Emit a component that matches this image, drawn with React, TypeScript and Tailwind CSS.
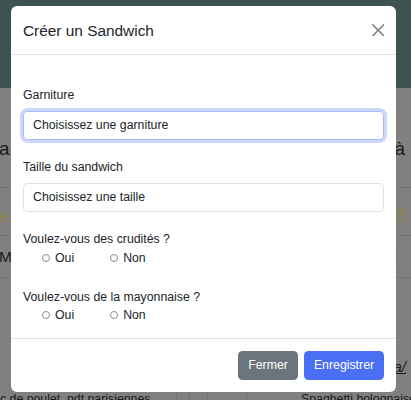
import React from "react";

function Radio({ label, className = "" }: { label: string; className?: string }) {
  return (
    <div className={"flex items-center " + className}>
      <span className="w-[8px] h-[8px] rounded-full border border-[#8a8a8a] bg-white" />
      <span className="ml-[5px]">{label}</span>
    </div>
  );
}

export default function App() {
  return (
    <div className="relative w-[411px] h-[400px] overflow-hidden bg-[#808080] font-['Liberation_Sans',Arial,sans-serif] text-[#1a1a1a]">
      {/* dimmed page behind the modal */}
      <div className="h-[88px] bg-[#3e524f]" />
      <div className="h-[100px] pt-[24px] flex items-center justify-between border-b border-[#737373] text-[19px]">
        <span className="ml-[-1px]">a</span>
        <span className="pr-[6px]">à</span>
      </div>
      <div className="h-[48px] pt-[10px] flex items-center justify-between border-b border-[#737373] text-[18px] italic text-[#8f8245]">
        <span className="ml-[-2px]">e</span>
        <span className="pr-[4px]">5</span>
      </div>
      <div className="h-[42px] flex items-center justify-between border-b border-[#737373] text-[15.5px]">
        <span className="ml-[-1px]">M</span>
        <span className="pr-[14px]">l</span>
      </div>
      <div className="h-[108px] pb-[10px] flex items-end justify-end text-[15px]">
        <span className="pr-[5px] italic underline leading-[18px]">a/</span>
      </div>
      <div className="grid grid-cols-[176px_13px_18px_39px_1fr] text-[12.3px] leading-[18px] h-[20px]">
        <div className="pt-[4px] whitespace-nowrap overflow-hidden">c de poulet, pdt parisiennes,</div>
        <div className="border-l border-[#737373]" />
        <div className="border-l border-[#737373]" />
        <div className="border-l border-[#737373]" />
        <div className="border-l border-[#737373] pt-[4px] pl-[54px] whitespace-nowrap overflow-hidden">Spaghetti bolognaise</div>
      </div>

      {/* modal */}
      <div className="absolute left-[11px] top-[6px] w-[385px] h-[386px] bg-white rounded-[6px] flex flex-col text-[#212529]">
        <div className="h-[49px] shrink-0 border-b border-[#dee2e6] px-[12px] flex items-center justify-between">
          <span className="text-[15.4px] leading-[23px]">Créer un Sandwich</span>
          <svg width="12.5" height="12.5" viewBox="0 0 16 16" className="opacity-50">
            <path
              fill="#000"
              d="M.293.293a1 1 0 0 1 1.414 0L8 6.586 14.293.293a1 1 0 1 1 1.414 1.414L9.414 8l6.293 6.293a1 1 0 0 1-1.414 1.414L8 9.414l-6.293 6.293a1 1 0 0 1-1.414-1.414L6.586 8 .293 1.707a1 1 0 0 1 0-1.414z"
            />
          </svg>
        </div>

        <div className="flex-1 px-[12px] pt-[31px] text-[12.3px] leading-[18.5px]">
          <div className="mb-[6px]">Garniture</div>
          <div className="h-[29.5px] border border-[#a7b8f9] rounded-[4.6px] shadow-[0_0_0_3px_#cdd7fc] px-[9px] flex items-center mb-[18px]">
            Choisissez une garniture
          </div>

          <div className="mb-[6px]">Taille du sandwich</div>
          <div className="h-[29.5px] border border-[#dee2e6] rounded-[4.6px] px-[9px] flex items-center mb-[18px]">
            Choisissez une taille
          </div>

          <div>Voulez-vous des crudités ?</div>
          <div className="h-[20.7px] flex items-start pl-[19px] mb-[18.5px]">
            <Radio label="Oui" />
            <Radio label="Non" className="ml-[36px]" />
          </div>

          <div>Voulez-vous de la mayonnaise ?</div>
          <div className="h-[20.7px] flex items-start pl-[19px]">
            <Radio label="Oui" />
            <Radio label="Non" className="ml-[36px]" />
          </div>
        </div>

        <div className="h-[54px] shrink-0 border-t border-[#dee2e6] flex items-center justify-end gap-[6px] pr-[12px] text-[12.3px] text-white">
          <div className="w-[60px] h-[28.5px] rounded-[4.6px] bg-[#6c757d] flex items-center justify-center">Fermer</div>
          <div className="w-[80px] h-[28.5px] rounded-[4.6px] bg-[#4b6ff4] flex items-center justify-center">Enregistrer</div>
        </div>
      </div>
    </div>
  );
}
